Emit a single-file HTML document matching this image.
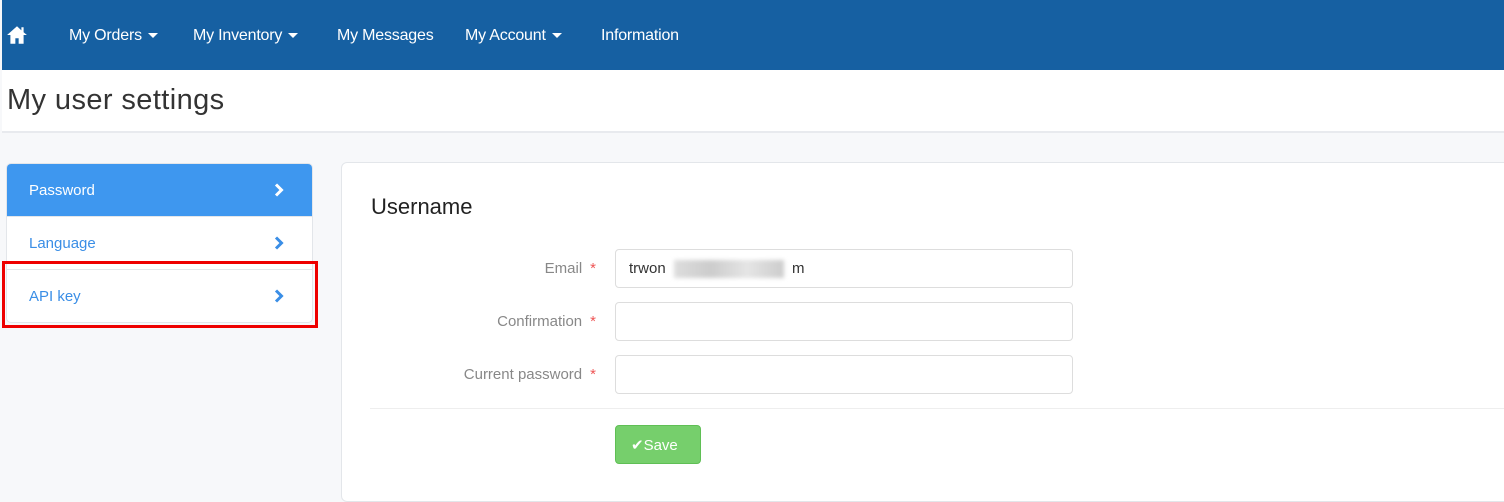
<!DOCTYPE html>
<html><head><style>
*{box-sizing:border-box;margin:0;padding:0}
body{width:1504px;height:492px;overflow:hidden;background:#f7f8fa;font-family:"Liberation Sans",sans-serif;position:relative}
.nav{position:absolute;left:2px;top:0;width:1502px;height:70px;background:#1660a2;color:#fff;font-size:16px}
.nav span{position:absolute;top:27px;letter-spacing:-0.2px}
.caret{display:inline-block;width:0;height:0;border-left:5px solid transparent;border-right:5px solid transparent;border-top:5px solid #fff;vertical-align:middle;margin-left:6px}
.hd{position:absolute;left:2px;top:70px;width:1502px;height:63px;background:#fff;border-bottom:2px solid #e8eaee}
.hd h1{position:absolute;left:5px;top:14px;font-size:29px;font-weight:normal;color:#333;letter-spacing:0.4px}
.side{position:absolute;left:6px;top:163px;width:307px;height:160px;background:#fff;border:1px solid #e3e6ea;border-radius:5px;overflow:hidden}
.item{height:53px;position:relative;border-bottom:1px solid #e3e6ea;color:#3a8ee6;font-size:15px}
.item span{position:absolute;left:22px;top:18px}
.item svg{position:absolute;left:267px;top:19px}
.item.act{background:#3e97ef;color:#fff}
.red{position:absolute;left:2px;top:261px;width:316px;height:67px;border:3px solid #e00}
.panel{position:absolute;left:341px;top:162px;width:1170px;height:340px;background:#fff;border:1px solid #e3e6ea;border-radius:6px}
.panel h2{position:absolute;left:29px;top:31px;font-size:22px;font-weight:normal;color:#222}
.lbl{position:absolute;right:914px;font-size:15px;color:#888;text-align:right;white-space:nowrap}
.lbl i{color:#e55;font-style:normal;margin-left:8px}
.inp{position:absolute;left:273px;width:458px;height:39px;border:1px solid #ddd;border-radius:4px;background:#fff;font-size:15px;color:#333;padding:10px 13px}
.blur{position:absolute;left:58px;top:10px;width:110px;height:18px;background:linear-gradient(90deg,#ddd,#ccc,#e5e5e5,#ccc);filter:blur(2px)}
.sep{position:absolute;left:28px;right:0;top:245px;border-top:1px solid #eee}
.btn{position:absolute;left:273px;top:262px;width:86px;height:39px;background:#76cf6c;border:1px solid #5fbf55;border-radius:4px;color:#fff;font-size:15px;padding:10px 0 0 15px}
</style></head><body>
<div class="nav">
<svg style="position:absolute;left:4px;top:24px" width="22" height="22" viewBox="0 0 20 20"><path d="M10 2L1 10h3v8h4.5v-5h3v5H16v-8h3L16 7.5V3h-2v2.8z" fill="#fff"/></svg>
<span style="left:67px">My Orders<i class="caret"></i></span>
<span style="left:191px">My Inventory<i class="caret"></i></span>
<span style="left:335px">My Messages</span>
<span style="left:463px">My Account<i class="caret"></i></span>
<span style="left:599px">Information</span>
</div>
<div class="hd"><h1>My user settings</h1></div>
<div class="side">
<div class="item act"><span>Password</span><svg width="10" height="14" viewBox="0 0 10 14"><path d="M2 1.5l5.5 5.5L2 12.5" stroke="#fff" stroke-width="3" fill="none"/></svg></div>
<div class="item"><span>Language</span><svg width="10" height="14" viewBox="0 0 10 14"><path d="M2 1.5l5.5 5.5L2 12.5" stroke="#3a8ee6" stroke-width="3" fill="none"/></svg></div>
<div class="item" style="border:0"><span>API key</span><svg width="10" height="14" viewBox="0 0 10 14"><path d="M2 1.5l5.5 5.5L2 12.5" stroke="#3a8ee6" stroke-width="3" fill="none"/></svg></div>
</div>
<div class="red"></div>
<div class="panel">
<h2>Username</h2>
<div class="lbl" style="top:97px">Email<i>*</i></div>
<div class="inp" style="top:86px">trwon<div class="blur"></div><span style="position:absolute;left:176px;top:10px">m</span></div>
<div class="lbl" style="top:150px">Confirmation<i>*</i></div>
<div class="inp" style="top:139px"></div>
<div class="lbl" style="top:203px">Current password<i>*</i></div>
<div class="inp" style="top:192px"></div>
<div class="sep"></div>
<div class="btn">✔Save</div>
</div>
</body></html>
